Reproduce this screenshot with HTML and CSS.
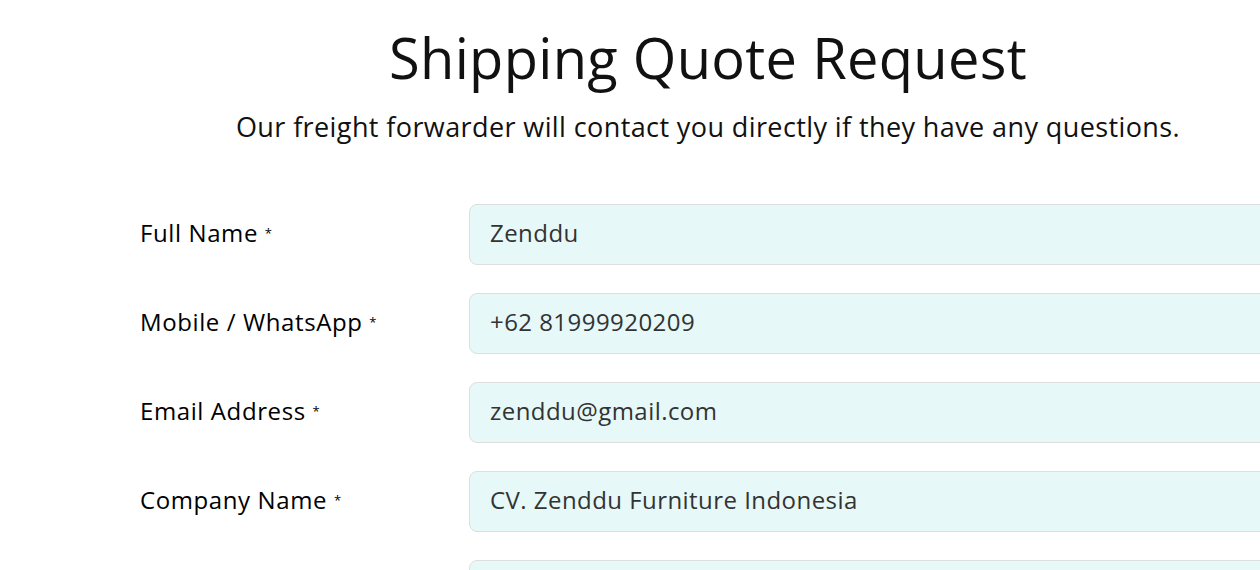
FILE: index.html
```html
<!DOCTYPE html>
<html lang="en">
<head>
    <meta charset="UTF-8">
    <title>Shipping Quote Request</title>
    <link rel="stylesheet" href="styles.css">
</head>
<body>
    <div class="container">
        <h1>Shipping Quote Request</h1>
        <p class="intro">Our freight forwarder will contact you directly if they have any questions.</p>

        <form class="quote-form">
            <div class="form-row">
                <label for="full-name">Full Name <span class="req">*</span></label>
                <input id="full-name" type="text" value="Zenddu">
            </div>
            <div class="form-row">
                <label for="mobile">Mobile / WhatsApp <span class="req">*</span></label>
                <input id="mobile" type="text" value="+62 81999920209">
            </div>
            <div class="form-row">
                <label for="email">Email Address <span class="req">*</span></label>
                <input id="email" type="text" value="zenddu@gmail.com">
            </div>
            <div class="form-row">
                <label for="company">Company Name <span class="req">*</span></label>
                <input id="company" type="text" value="CV. Zenddu Furniture Indonesia">
            </div>
            <div class="form-row">
                <label for="country">Country <span class="req">*</span></label>
                <input id="country" type="text" value="">
            </div>
        </form>
    </div>
</body>
</html>
```

FILE: styles.css
```css
body {
    margin: 0;
    padding: 0;
    font-family: 'Open Sans', sans-serif;
    color: #111111;
    background-color: #ffffff;
    overflow: hidden;
}
.container {
    width: 1136px;
    margin-left: 140px;
    padding-top: 21px;
}
h1 {
    margin: 0;
    text-align: center;
    font-weight: normal;
    font-size: 56px;
    line-height: 72px;
    letter-spacing: 0.3px;
}
.intro {
    margin: 17px 0 0 0;
    text-align: center;
    font-size: 27px;
    line-height: 34px;
    letter-spacing: 0.4px;
}
.quote-form {
    margin-top: 60px;
}
.form-row {
    display: flex;
    align-items: center;
    margin-bottom: 28px;
}
.form-row label {
    width: 329px;
    flex-shrink: 0;
    padding-bottom: 5px;
    font-size: 24px;
    letter-spacing: 0.6px;
    color: #000000;
}
.req {
    font-size: 13px;
    vertical-align: 4px;
    letter-spacing: 0;
}
.form-row input {
    flex: 1;
    height: 61px;
    box-sizing: border-box;
    padding: 0 20px 5px 20px;
    border: 1px solid #dedede;
    border-radius: 8px;
    background-color: #e6f9f8;
    font-family: inherit;
    font-size: 24px;
    letter-spacing: 0.45px;
    color: #333333;
}
```
